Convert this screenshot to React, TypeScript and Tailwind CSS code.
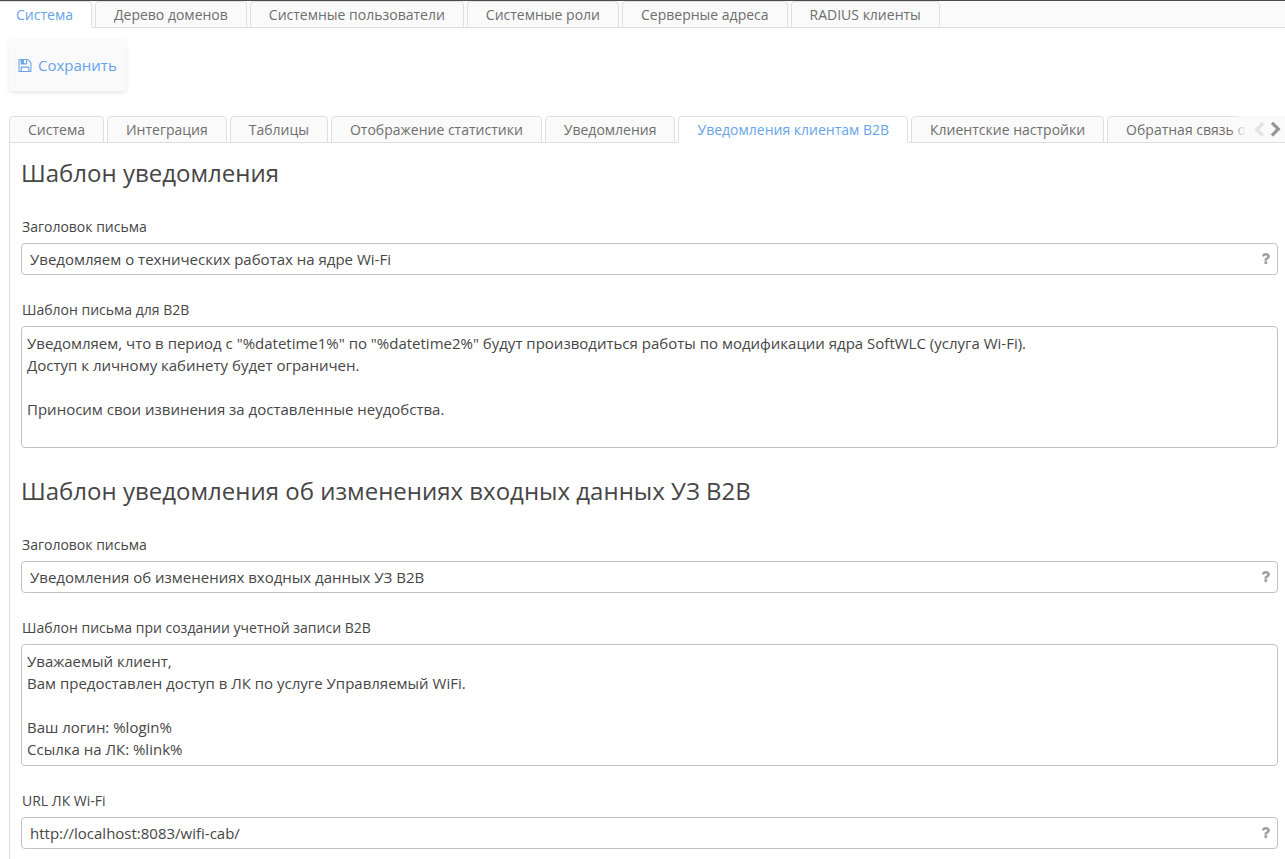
import { useState } from "react";
import clsx from "clsx";

const mainTabs = [
  "Система",
  "Дерево доменов",
  "Системные пользователи",
  "Системные роли",
  "Серверные адреса",
  "RADIUS клиенты",
];

const settingsTabs = [
  "Система",
  "Интеграция",
  "Таблицы",
  "Отображение статистики",
  "Уведомления",
  "Уведомления клиентам B2B",
  "Клиентские настройки",
  "Обратная связь о работе",
];

const b2bTemplate = `Уведомляем, что в период с "%datetime1%" по "%datetime2%" будут производиться работы по модификации ядра SoftWLC (услуга Wi-Fi).
Доступ к личному кабинету будет ограничен.

Приносим свои извинения за доставленные неудобства.
`;

const accountTemplate = `Уважаемый клиент,
Вам предоставлен доступ в ЛК по услуге Управляемый WiFi.

Ваш логин: %login%
Ссылка на ЛК: %link%`;

const SaveIcon = () => (
  <svg viewBox="128 128 1536 1536" className="h-[13px] w-[14px] shrink-0" fill="currentColor" aria-hidden="true">
    <path d="M512 1536h768v-384h-768v384zm896 0h128v-896q0-14-10-38.5t-20-34.5l-281-281q-10-10-34-20t-39-10v416q0 40-28 68t-68 28h-576q-40 0-68-28t-28-68v-416h-128v1280h128v-416q0-40 28-68t68-28h832q40 0 68 28t28 68v416zm-384-928v-320q0-13-9.5-22.5t-22.5-9.5h-192q-13 0-22.5 9.5t-9.5 22.5v320q0 13 9.5 22.5t22.5 9.5h192q13 0 22.5-9.5t9.5-22.5zm640 32v928q0 40-28 68t-68 28h-1344q-40 0-68-28t-28-68v-1344q0-40 28-68t68-28h928q40 0 88 20t76 48l280 280q28 28 48 76t20 88z" />
  </svg>
);

const QuestionIcon = () => (
  <svg viewBox="380 256 1024 1280" className="mb-px h-[11px] w-[9px] shrink-0 text-[#a0a0a0]" fill="currentColor" aria-hidden="true">
    <path d="M1088 1256v240q0 16-12 28t-28 12h-240q-16 0-28-12t-12-28v-240q0-16 12-28t28-12h240q16 0 28 12t12 28zm316-600q0 54-15.5 101t-35 76.5-55 59.5-57.5 43.5-61 35.5q-41 23-68.5 65t-27.5 67q0 17-12 32.5t-28 15.5h-240q-15 0-25.5-18.5t-10.5-37.5v-45q0-83 65-156.5t143-108.5q59-27 84-56t25-76q0-42-46.5-74t-107.5-32q-65 0-108 29-35 25-107 115-13 16-31 16-12 0-25-8l-164-125q-13-10-15.5-25t5.5-28q160-266 464-266 80 0 161 31t146 83 106 127.5 41 158.5z" />
  </svg>
);

const PrevIcon = () => (
  <svg viewBox="346 26 1100 1612" className="h-[15px] w-[10px]" fill="currentColor" aria-hidden="true">
    <path d="M1427 301l-531 531 531 531q19 19 19 45t-19 45l-166 166q-19 19-45 19t-45-19l-742-742q-19-19-19-45t19-45l742-742q19-19 45-19t45 19l166 166q19 19 19 45t-19 45z" />
  </svg>
);

const NextIcon = () => (
  <svg viewBox="346 70 1100 1612" className="h-[15px] w-[10px]" fill="currentColor" aria-hidden="true">
    <path d="M1363 877l-742 742q-19 19-45 19t-45-19l-166-166q-19-19-19-45t19-45l531-531-531-531q-19-19-19-45t19-45l166-166q19-19 45-19t45 19l742 742q19 19 19 45t-19 45z" />
  </svg>
);

type TabProps = {
  label: string;
  active: boolean;
  flush?: boolean;
  onClick: () => void;
};

const Tab = ({ label, active, flush, onClick }: TabProps) => (
  <button
    type="button"
    role="tab"
    aria-selected={active}
    onClick={onClick}
    className={clsx(
      "h-[27px] shrink-0 whitespace-nowrap border border-[#dfdfdf] pr-[18px] text-sm leading-6 cursor-pointer",
      flush ? "rounded-tr border-l-0 pl-4" : "rounded-t pl-[18px]",
      active ? "border-b-white bg-white text-[#66a3e8]" : "bg-[#fafafa] text-[#6e6e6e] hover:text-[#66a3e8]"
    )}
  >
    {label}
  </button>
);

const Field = ({ id, label, defaultValue }: { id: string; label: string; defaultValue: string }) => (
  <div className="mb-6">
    <label htmlFor={id} className="mb-[5px] block pl-px text-sm leading-[22px]">
      {label}
    </label>
    <div className="flex h-8 items-center rounded border border-[#c3c3c3] bg-white pr-[7px]">
      <input
        id={id}
        type="text"
        defaultValue={defaultValue}
        className="h-full min-w-0 flex-1 bg-transparent px-2 text-[15px] focus:outline-none"
      />
      <QuestionIcon />
    </div>
  </div>
);

const TextField = ({ id, label, defaultValue }: { id: string; label: string; defaultValue: string }) => (
  <div className="mb-6">
    <label htmlFor={id} className="mb-[5px] block pl-px text-sm leading-[22px]">
      {label}
    </label>
    <textarea
      id={id}
      defaultValue={defaultValue}
      className="block h-[122px] w-full resize-none rounded border border-[#c3c3c3] bg-white p-[5px] text-[15px] leading-[22px] focus:outline-none"
    />
  </div>
);

const App = () => {
  const [mainTab, setMainTab] = useState(0);
  const [settingsTab, setSettingsTab] = useState(5);

  return (
    <div className="flex min-h-screen flex-col border-t border-[#4b4951] bg-white font-['Open_Sans','Noto_Sans',sans-serif] text-[#464646]">
      {/* Main tabs */}
      <div role="tablist" className="flex gap-[3px] overflow-hidden bg-[#fafafa] shadow-[inset_0_-1px_0_#dfdfdf]">
        {mainTabs.map((label, i) => (
          <Tab key={label} label={label} active={i === mainTab} flush={i === 0} onClick={() => setMainTab(i)} />
        ))}
      </div>

      {/* Toolbar */}
      <div className="px-[9px] pt-[11px] pb-[25px]">
        <button
          type="button"
          className="flex h-[52px] cursor-pointer items-center gap-[6px] rounded bg-[#fafafa] px-[9px] text-[15px] text-[#66a3e8] shadow-[0_2px_4px_rgba(0,0,0,0.1)]"
        >
          <SaveIcon />
          Сохранить
        </button>
      </div>

      <div className="ml-[9px] flex flex-1 flex-col">
        {/* Settings tabs */}
        <div className="relative">
          <div role="tablist" className="flex gap-[3px] overflow-hidden shadow-[inset_0_-1px_0_#dfdfdf]">
            {settingsTabs.map((label, i) => (
              <Tab key={label} label={label} active={i === settingsTab} onClick={() => setSettingsTab(i)} />
            ))}
          </div>
          <div className="absolute top-0 right-0 flex h-[26px] items-center gap-[7px] bg-linear-to-r from-[#fafafa]/0 to-[#fafafa] to-30% pr-1 pl-6">
            <button type="button" aria-label="Назад" disabled className="text-[#e3e3e3]">
              <PrevIcon />
            </button>
            <button type="button" aria-label="Вперёд" className="cursor-pointer text-[#969696]">
              <NextIcon />
            </button>
          </div>
        </div>

        {/* Templates */}
        <form className="flex-1 border-l border-[#dfdfdf] pt-[14px] pr-[7px] pl-[11px]">
          <h2 className="mb-[27px] text-2xl leading-8">Шаблон уведомления</h2>
          <Field id="notify-subject" label="Заголовок письма" defaultValue="Уведомляем о технических работах на ядре Wi-Fi" />
          <TextField id="notify-body" label="Шаблон письма для B2B" defaultValue={b2bTemplate} />

          <h2 className="mt-[27px] mb-[27px] text-2xl leading-8">Шаблон уведомления об изменениях входных данных УЗ B2B</h2>
          <Field id="account-subject" label="Заголовок письма" defaultValue="Уведомления об изменениях входных данных УЗ B2B" />
          <TextField id="account-body" label="Шаблон письма при создании учетной записи B2B" defaultValue={accountTemplate} />
          <Field id="cabinet-url" label="URL ЛК Wi-Fi" defaultValue="http://localhost:8083/wifi-cab/" />
        </form>
      </div>
    </div>
  );
};

export default App;
